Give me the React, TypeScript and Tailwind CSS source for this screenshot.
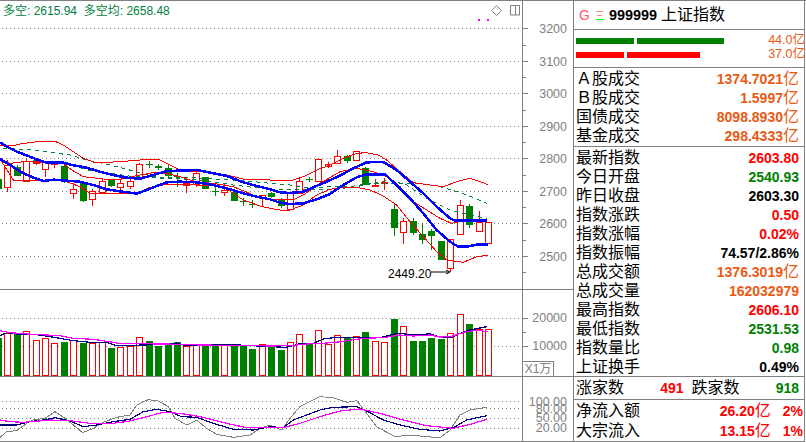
const GRID = "#808080"
const RED = "#ff0000"
const GREEN = "#008000"
const ORANGE = "#e85a14"

// values below were read off the chart: y = top + z / 3
const barX = (i: number) => 7.3 + 9.425 * i
const my = (z: number) => 130 + z / 3
const ly = (z: number) => 285 + z / 3

// [index, red?, body top, body bottom, wick top, wick bottom]
const candles: [number, number, number, number, number, number][] = [
  [-1, 0, 147, 177, 147, 177], [0, 1, 105, 172, 90, 185], [1, 0, 112, 138, 105, 138], [2, 1, 92, 153, 87, 155],
  [3, 1, 92, 98, 87, 105], [4, 1, 97, 116, 92, 140], [5, 1, 97, 103, 92, 115], [6, 0, 108, 152, 100, 160],
  [7, 1, 178, 190, 160, 207], [8, 0, 160, 213, 155, 215], [9, 1, 184, 208, 178, 228], [10, 1, 152, 185, 145, 190],
  [11, 0, 150, 168, 150, 172], [12, 1, 160, 170, 150, 180], [13, 1, 154, 167, 140, 177], [14, 1, 103, 140, 100, 145],
  [15, 0, 102, 104, 93, 115], [16, 0, 107, 115, 102, 120], [17, 0, 115, 137, 105, 145], [18, 0, 139, 141, 130, 170],
  [19, 1, 160, 166, 150, 188], [20, 1, 130, 163, 125, 170], [21, 0, 142, 177, 140, 177], [22, 0, 183, 185, 170, 197],
  [23, 1, 180, 187, 160, 197], [24, 0, 185, 213, 180, 213], [25, 0, 212, 214, 203, 228], [26, 0, 221, 223, 210, 233],
  [27, 1, 195, 203, 195, 230], [28, 0, 190, 201, 185, 205], [29, 0, 210, 227, 205, 233], [30, 1, 188, 237, 185, 240],
  [31, 1, 154, 188, 143, 190], [32, 0, 147, 149, 140, 157], [33, 1, 88, 152, 88, 157], [34, 1, 103, 109, 95, 115],
  [35, 1, 79, 100, 60, 100], [36, 0, 78, 92, 75, 98], [37, 1, 64, 91, 62, 91], [38, 0, 113, 164, 112, 165],
  [39, 1, 165, 169, 148, 170], [40, 1, 156, 160, 145, 180], [41, 0, 237, 293, 220, 318], [42, 1, 273, 305, 265, 342],
  [43, 0, 273, 308, 265, 315], [44, 0, 313, 330, 280, 342], [45, 0, 303, 318, 297, 360], [46, 0, 333, 389, 333, 389],
  [47, 1, 328, 415, 328, 425], [48, 1, 226, 313, 210, 313], [49, 0, 229, 285, 222, 293], [50, 1, 277, 302, 243, 302],
  [51, 1, 277, 338, 277, 338],
]

// [index, red?, top y]
const volumes: [number, number, number][] = [
  [-1, 0, 338], [0, 1, 333], [1, 0, 334], [2, 1, 331], [3, 1, 340], [4, 1, 338], [5, 1, 343], [6, 0, 342], [7, 1, 340],
  [8, 0, 343], [9, 1, 343], [10, 1, 342], [11, 0, 348], [12, 1, 347], [13, 1, 346], [14, 1, 337], [15, 0, 341],
  [16, 0, 346], [17, 0, 344], [18, 0, 342], [19, 1, 346], [20, 1, 345], [21, 0, 345], [22, 0, 345], [23, 1, 345],
  [24, 0, 345], [25, 0, 346], [26, 0, 349], [27, 1, 344], [28, 0, 347], [29, 0, 350], [30, 1, 342], [31, 1, 334],
  [32, 0, 344], [33, 1, 330], [34, 1, 344], [35, 1, 335], [36, 0, 338], [37, 1, 336], [38, 0, 332], [39, 1, 341],
  [40, 1, 342], [41, 0, 319], [42, 1, 326], [43, 0, 341], [44, 0, 341], [45, 0, 338], [46, 0, 339], [47, 1, 333],
  [48, 1, 314], [49, 0, 324], [50, 1, 329], [51, 1, 329],
]

type P = [number, number][]
// left part is in the first zoom's coordinates, right part starts at x = 270
const line = (left: P, right: P, toY: (z: number) => number) =>
  [...left.map(([x, y]) => `${x / 3},${toY(y)}`), ...right.map(([x, y]) => `${270 + x / 3},${toY(y)}`)].join(" ")

const blueUp = line(
  [[0, 37], [20, 50], [50, 65], [85, 78], [115, 90], [135, 97], [190, 98], [220, 106], [260, 113], [300, 125], [340, 135], [380, 143], [420, 146], [460, 135], [500, 123], [540, 122], [590, 120], [625, 127], [680, 138], [730, 157], [770, 168]],
  [[0, 178], [30, 187], [60, 189], [100, 185], [130, 172], [170, 155], [210, 137], [250, 115], [290, 97], [340, 96], [380, 120], [420, 155], [460, 190], [500, 230], [540, 265], [555, 272], [590, 272], [650, 272]],
  my,
)
const blueDown = line(
  [[0, 87], [30, 105], [60, 125], [100, 143], [130, 153], [160, 149], [200, 152], [240, 155], [280, 165], [320, 178], [360, 184], [410, 191], [440, 180], [470, 168], [500, 157], [540, 155], [590, 157], [630, 163], [680, 175], [730, 190], [770, 200]],
  [[0, 208], [30, 218], [60, 222], [100, 220], [140, 208], [180, 192], [220, 165], [260, 142], [290, 133], [345, 133], [380, 165], [420, 205], [460, 250], [500, 300], [540, 335], [565, 350], [590, 350], [620, 344], [655, 344]],
  my,
)
const redUp = line(
  [[0, 46], [35, 48], [60, 42], [90, 38], [120, 34], [165, 34], [190, 45], [220, 65], [250, 85], [280, 96], [340, 96], [400, 92], [440, 88], [480, 90], [510, 105], [540, 120], [570, 125], [620, 125], [680, 135], [740, 150], [780, 148]],
  [[0, 150], [70, 150], [100, 140], [140, 120], [180, 105], [220, 85], [260, 70], [290, 68], [325, 75], [350, 90], [390, 125], [430, 158], [480, 165], [520, 170], [560, 155], [600, 145], [640, 158], [655, 165]],
  my,
)
const redMid = line(
  [[0, 90], [30, 100], [70, 95], [130, 97], [190, 100], [215, 120], [250, 140], [310, 147], [360, 148], [420, 135], [460, 128], [500, 130], [540, 140], [590, 157], [640, 160], [700, 170], [760, 195]],
  [[0, 208], [70, 210], [100, 195], [150, 160], [210, 125], [260, 115], [310, 125], [350, 140], [390, 170], [430, 215], [470, 240], [510, 265], [545, 280], [580, 273], [610, 270], [650, 275]],
  my,
)
const redDown = line(
  [[0, 87], [40, 150], [75, 153], [120, 150], [165, 150], [200, 155], [240, 170], [270, 190], [320, 190], [370, 192], [410, 190], [450, 172], [490, 165], [540, 163], [590, 165], [640, 165], [680, 177], [730, 210], [780, 228]],
  [[0, 235], [30, 240], [60, 240], [100, 225], [140, 195], [180, 178], [220, 172], [260, 172], [300, 180], [340, 198], [380, 225], [420, 275], [460, 320], [500, 365], [530, 390], [580, 397], [620, 380], [655, 376]],
  my,
)
const dashUp = line(
  [[10, 55], [80, 58], [150, 67], [210, 75], [260, 90], [330, 105], [400, 123], [460, 140], [500, 143], [570, 143], [640, 147], [700, 150], [760, 155]],
  [[0, 160], [60, 165], [120, 175], [180, 170], [240, 170], [300, 160], [370, 160], [450, 162], [510, 170], [570, 187], [610, 203], [650, 220]],
  my,
)
const dashDown = line(
  [[100, 90], [200, 100], [260, 120], [330, 130], [400, 140], [500, 145], [600, 150], [700, 165]],
  [[0, 178], [80, 180], [180, 178], [250, 172], [310, 160], [360, 150], [410, 165], [470, 205], [540, 240], [600, 255], [650, 265]],
  my,
)
const volPink = line(
  [[0, 137], [30, 143], [100, 148], [180, 152], [220, 160], [280, 163], [340, 172], [360, 176], [500, 177], [600, 180], [700, 181]],
  [[0, 183], [60, 182], [110, 177], [190, 173], [280, 160], [340, 158], [390, 150], [430, 153], [480, 150], [510, 156], [540, 155], [590, 140], [620, 136], [655, 140]],
  ly,
)
const volNavy = line(
  [[0, 152], [20, 143], [50, 147], [120, 150], [180, 160], [220, 167], [270, 172], [320, 172], [350, 182], [430, 180], [500, 178], [530, 174], [550, 180], [700, 179]],
  [[0, 185], [50, 187], [90, 176], [130, 175], [160, 162], [200, 157], [260, 158], [330, 158], [380, 145], [440, 150], [480, 146], [515, 158], [545, 157], [590, 137], [650, 125]],
  ly,
)
const kGray = line(
  [[0, 457], [20, 440], [50, 437], [80, 415], [100, 405], [135, 400], [165, 380], [195, 400], [220, 420], [248, 443], [280, 430], [310, 412], [350, 397], [390, 390], [410, 360], [445, 344], [475, 348], [505, 365], [525, 400], [560, 420], [590, 405], [620, 430], [650, 448], [700, 457], [750, 450], [780, 430]],
  [[0, 420], [35, 435], [60, 400], [90, 365], [120, 350], [150, 335], [190, 338], [230, 352], [260, 347], [290, 385], [320, 425], [375, 455], [420, 450], [470, 455], [510, 458], [540, 435], [570, 390], [600, 375], [650, 367]],
  ly,
)
const kNavy = line(
  [[0, 420], [50, 420], [90, 410], [130, 405], [165, 398], [210, 408], [250, 425], [290, 420], [340, 410], [390, 403], [430, 380], [470, 373], [510, 380], [545, 395], [590, 397], [640, 415], [700, 433], [760, 435]],
  [[0, 425], [40, 428], [70, 405], [110, 390], [150, 375], [190, 367], [260, 365], [290, 378], [340, 405], [390, 420], [450, 433], [510, 438], [550, 428], [590, 405], [650, 392]],
  ly,
)
const kPink = line(
  [[0, 405], [30, 410], [70, 412], [150, 405], [210, 407], [270, 415], [340, 415], [390, 408], [440, 395], [490, 382], [540, 385], [600, 395], [680, 415], [740, 428]],
  [[0, 428], [40, 428], [90, 415], [150, 395], [210, 378], [270, 372], [330, 385], [400, 405], [470, 422], [550, 430], [600, 418], [650, 403]],
  ly,
)

const Dotted = ({ y }: { y: number }) => (
  <line x1={2} x2={520} y1={y + 0.5} y2={y + 0.5} stroke={GRID} strokeWidth={1} strokeDasharray="1 3" />
)

const Poly = ({ points, color, width = 1, dash }: { points: string; color: string; width?: number; dash?: string }) => (
  <polyline points={points} fill="none" stroke={color} strokeWidth={width} strokeDasharray={dash} shapeRendering="crispEdges" />
)

const Label = ({ y, text }: { y: number; text: string }) => (
  <span className="absolute right-[6px] -translate-y-1/2 text-[12.5px] leading-none text-[#808080]" style={{ top: y }}>
    {text}
  </span>
)

const Tick = ({ y, long }: { y: number; long?: boolean }) => (
  <div className={`absolute left-0 h-px bg-[#808080] ${long ? "w-[5px]" : "w-[3px]"}`} style={{ top: y }} />
)

const MainChart = () => (
  <div className="relative flex h-[289px] border-b border-[#808080]">
    <svg width={522} height={288} viewBox="0 1 522 288" className="shrink-0">
      {[28, 61, 93, 126, 158, 191, 223, 256].map((y) => <Dotted key={y} y={y} />)}
      {candles.map(([i, red, top, bottom, wt, wb]) => {
        const c = Math.round(barX(i))
        const color = red ? RED : GREEN
        const t = Math.round(my(top))
        const b = Math.round(my(bottom))
        return (
          <g key={i} shapeRendering="crispEdges">
            <line x1={c + 0.5} x2={c + 0.5} y1={my(wt)} y2={my(wb)} stroke={color} />
            {red ? (
              <rect x={c - 2.5} y={t + 0.5} width={6} height={Math.max(b - t, 1)} fill="#fff" stroke={color} />
            ) : (
              <rect x={c - 3} y={t} width={7} height={Math.max(b - t, 1)} fill={color} />
            )}
          </g>
        )
      })}
      <Poly points={dashUp} color="#008040" dash="4 4" />
      <Poly points={dashDown} color="#008040" dash="4 4" />
      <Poly points={redUp} color={RED} />
      <Poly points={redMid} color={RED} />
      <Poly points={redDown} color={RED} />
      <Poly points={blueUp} color="#0000ff" width={2.5} />
      <Poly points={blueDown} color="#0000ff" width={2.5} />
      <path d="M431 272H449M446 270l4 2-4 2" fill="none" stroke="#000" strokeWidth={1} />
      <rect x={478} y={19} width={2} height={2} fill="#ff00ff" />
      <rect x={487} y={19} width={2} height={2} fill="#ff00ff" />
      <path d="M496.5 5.5l5 5-5 5-5-5z" fill="none" stroke={GRID} />
      <path d="M510.5 5.5h9v9.5h-9zM515.5 5.5v9.5" fill="none" stroke={GRID} />
    </svg>
    <span className="absolute left-[3px] top-[3px] text-[12px] leading-[14px] text-[#008040] whitespace-pre">
      多空: 2615.94  多空均: 2658.48
    </span>
    <span className="absolute left-[388px] top-[266px] text-[12px] leading-[14px] text-black">2449.20</span>
    <div className="relative flex-1 border-l border-[#808080]">
      {[28, 61, 93, 126, 158, 191, 223, 256].map((y) => <Tick key={y} y={y - 1} long />)}
      {[45, 77, 110, 142, 175, 207, 240, 272].map((y) => <Tick key={y} y={y - 1} />)}
      {["3200", "3100", "3000", "2900", "2800", "2700", "2600", "2500"].map((t, i) => (
        <Label key={t} y={[28, 61, 93, 126, 158, 191, 223, 256][i]} text={t} />
      ))}
    </div>
  </div>
)

const VolumeChart = () => (
  <div className="flex h-[87px] border-b border-[#808080]">
    <svg width={522} height={86} viewBox="0 290 522 86" className="shrink-0">
      <Dotted y={318} />
      <Dotted y={346} />
      {volumes.map(([i, red, top]) => {
        const c = Math.round(barX(i))
        return red ? (
          <rect key={i} x={c - 2.5} y={top + 0.5} width={6} height={375 - top} fill="#fff" stroke={RED} shapeRendering="crispEdges" />
        ) : (
          <rect key={i} x={c - 3} y={top} width={7} height={376 - top} fill={GREEN} />
        )
      })}
      <Poly points={volNavy} color="#000080" width={1.2} />
      <Poly points={volPink} color="#ff00ff" width={1.2} />
    </svg>
    <div className="relative flex-1 border-l border-[#808080]">
      <Tick y={28} long />
      <Tick y={56} long />
      <Tick y={42} />
      <Label y={28} text="20000" />
      <Label y={56} text="10000" />
      <div className="absolute bottom-0 left-0 flex h-[15px] w-[31px] items-center justify-center border-r border-t border-[#808080] text-[12px] leading-none text-[#808080]">
        X1万
      </div>
    </div>
  </div>
)

const KdjChart = () => (
  <div className="flex h-[65px] border-b border-[#808080]">
    <svg width={522} height={64} viewBox="0 377 522 64" className="shrink-0">
      {[401, 408, 418, 428].map((y) => <Dotted key={y} y={y} />)}
      <Poly points={kGray} color={GRID} />
      <Poly points={kNavy} color="#000080" width={1.2} />
      <Poly points={kPink} color="#ff00ff" width={1.2} />
    </svg>
    <div className="relative flex-1 border-l border-[#808080]">
      <Label y={25} text="100.00" />
      <Label y={32} text="80.00" />
      <Label y={41} text="50.00" />
      <Label y={51} text="20.00" />
    </div>
  </div>
)

const Row = ({ label, value, unit, color }: { label: string; value: string; unit?: string; color: string }) => (
  <div className="flex h-[19px] items-center justify-between pl-[2px] pr-[5px]">
    <span className="text-[16px] leading-none text-black">{label}</span>
    <span className="text-[14px] font-bold leading-none" style={{ color }}>
      {value}
      {unit && <span className="text-[16px] font-normal">{unit}</span>}
    </span>
  </div>
)

const SidePanel = () => (
  <div className="flex h-[441px] w-[232px] shrink-0 flex-col border-x border-b border-[#808080]">
    <div className="flex h-[29px] items-center border-b border-[#808080] pl-[5px]">
      <span className="w-[17px] text-[14px] leading-none text-[#ff5a6a]">G</span>
      <svg width={8} height={9} viewBox="0 0 8 9" className="mr-[5px]">
        <path d="M0 .5h7M1 4.5h5" stroke="#ff8a8a" />
        <path d="M0 8.5h8" stroke="#00ff00" />
      </svg>
      <span className="text-[14.4px] font-bold leading-none text-black">999999</span>
      <span className="ml-[4px] text-[16px] leading-none text-black">上证指数</span>
    </div>
    <div className="relative flex h-[38px] flex-col gap-[8px] border-b border-[#808080] pl-[2px] pt-[8px]">
      <div className="flex gap-[3px]">
        <div className="h-[6px] w-[58px] bg-[#008000]" />
        <div className="h-[6px] w-[87px] bg-[#008000]" />
      </div>
      <div className="flex gap-[3px]">
        <div className="h-[6px] w-[48px] bg-[#ff0000]" />
        <div className="h-[6px] w-[73px] bg-[#ff0000]" />
      </div>
      <span className="absolute right-[-1px] top-[3px] text-[12.5px] leading-[14px] text-[#e85a14]">44.0亿</span>
      <span className="absolute right-[-1px] top-[17px] text-[12.5px] leading-[14px] text-[#e85a14]">37.0亿</span>
    </div>
    <div className="flex flex-col border-b border-[#808080] py-[1px]">
      <Row label="Ａ股成交" value="1374.7021" unit="亿" color={ORANGE} />
      <Row label="Ｂ股成交" value="1.5997" unit="亿" color={ORANGE} />
      <Row label="国债成交" value="8098.8930" unit="亿" color={ORANGE} />
      <Row label="基金成交" value="298.4333" unit="亿" color={ORANGE} />
    </div>
    <div className="flex flex-col border-b border-[#808080] pt-[1px]">
      <Row label="最新指数" value="2603.80" color={RED} />
      <Row label="今日开盘" value="2540.93" color={GREEN} />
      <Row label="昨日收盘" value="2603.30" color="#000" />
      <Row label="指数涨跌" value="0.50" color={RED} />
      <Row label="指数涨幅" value="0.02%" color={RED} />
      <Row label="指数振幅" value="74.57/2.86%" color="#000" />
      <Row label="总成交额" value="1376.3019" unit="亿" color={ORANGE} />
      <Row label="总成交量" value="162032979" color={ORANGE} />
      <Row label="最高指数" value="2606.10" color={RED} />
      <Row label="最低指数" value="2531.53" color={GREEN} />
      <Row label="指数量比" value="0.98" color={GREEN} />
      <Row label="上证换手" value="0.49%" color="#000" />
    </div>
    <div className="flex h-[23px] items-center border-b border-[#808080] pl-[2px] pr-[5px] text-[16px] leading-none">
      <span>涨家数</span>
      <span className="ml-auto text-[14px] font-bold text-[#ff0000]">491</span>
      <span className="ml-[8px]">跌家数</span>
      <span className="ml-auto text-[14px] font-bold text-[#008000]">918</span>
    </div>
    <div className="flex flex-1 flex-col justify-center">
      {[
        ["净流入额", "26.20", "2%"],
        ["大宗流入", "13.15", "1%"],
      ].map(([label, value, pct]) => (
        <div key={label} className="flex h-[20px] items-center pl-[2px] pr-[1px] text-[16px] leading-none">
          <span>{label}</span>
          <span className="ml-auto text-[14px] font-bold text-[#ff0000]">
            {value}
            <span className="text-[16px] font-normal">亿</span>
          </span>
          <span className="ml-[12px] text-[14px] font-bold text-[#ff0000]">{pct}</span>
        </div>
      ))}
    </div>
  </div>
)

const App: React.FC = () => {
  return (
    <div className="flex h-[442px] w-[806px] overflow-hidden border-t border-[#808080] bg-white font-['Liberation_Sans','Noto_Sans_CJK_SC',sans-serif]">
      <div className="flex w-[573px] shrink-0 flex-col">
        <MainChart />
        <VolumeChart />
        <KdjChart />
      </div>
      <SidePanel />
    </div>
  )
}

export default App
